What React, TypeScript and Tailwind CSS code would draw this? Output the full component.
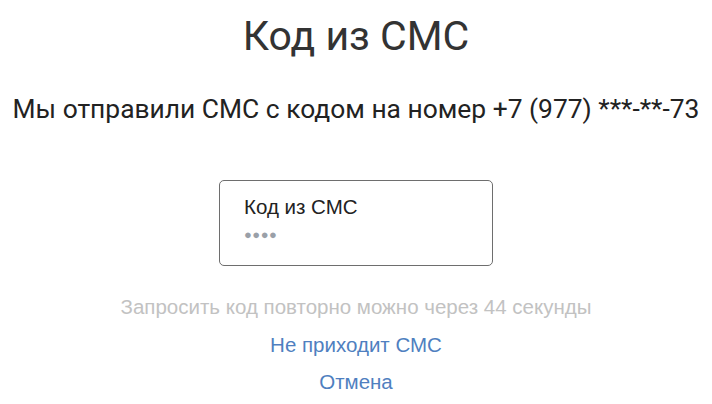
export default function App() {
  return (
    <div className="flex min-h-[404px] w-full flex-col items-center bg-white font-['Liberation_Sans',Arial,sans-serif]">
      <h1 className="mt-[11px] font-['Roboto',sans-serif] text-[41px] leading-[50px] text-[#333333]">
        Код из СМС
      </h1>
      <p className="mt-[33px] font-['Roboto',sans-serif] text-[26.4px] leading-[30px] text-[#222222]">
        Мы отправили СМС с кодом на номер +7 (977) ***-**-73
      </p>
      <div className="mt-[56px] flex h-[86px] w-[274px] flex-col rounded-[5px] border border-[#6e6e6e] px-[24px] pt-[14px]">
        <span className="text-[20.5px] leading-[24px] text-[#222222]">Код из СМС</span>
        <span className="mt-[9px] text-[13px] leading-[14px] tracking-[0.5px] text-[#9aa0a8]">●●●●</span>
      </div>
      <p className="mt-[30px] text-[20.5px] leading-[22px] text-[#c2c2c2]">
        Запросить код повторно можно через 44 секунды
      </p>
      <button className="mt-[16px] text-[20.5px] leading-[22px] text-[#4f7fc0]">Не приходит СМС</button>
      <button className="mt-[15px] text-[20.5px] leading-[22px] text-[#4f7fc0]">Отмена</button>
    </div>
  );
}
